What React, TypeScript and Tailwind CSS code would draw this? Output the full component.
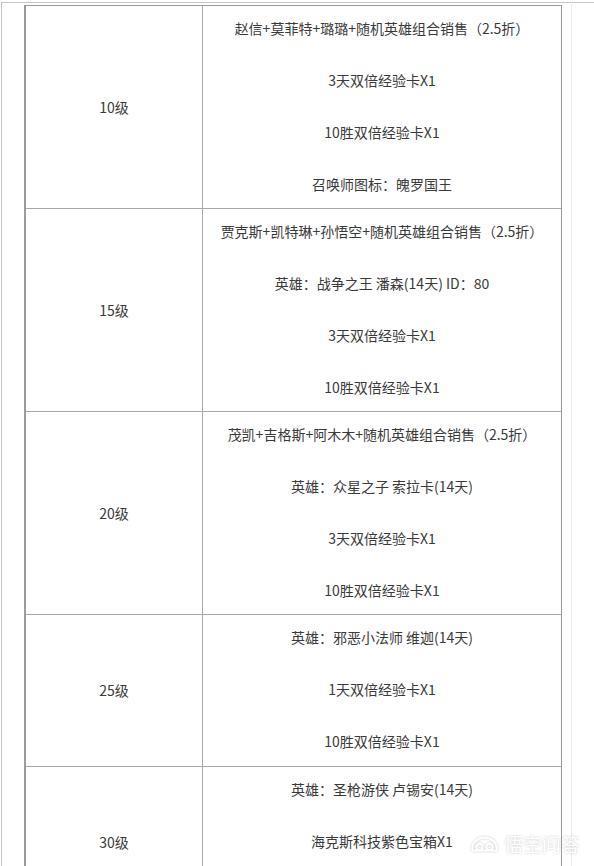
import React from 'react';

type Row = { level: string; items: string[]; h: string };

const rows: Row[] = [
  {
    level: '10级',
    h: 'h-[203px]',
    items: ['赵信+莫菲特+璐璐+随机英雄组合销售（2.5折）', '3天双倍经验卡X1', '10胜双倍经验卡X1', '召唤师图标：魄罗国王'],
  },
  {
    level: '15级',
    h: 'h-[203px]',
    items: ['贾克斯+凯特琳+孙悟空+随机英雄组合销售（2.5折）', '英雄：战争之王 潘森(14天) ID：80', '3天双倍经验卡X1', '10胜双倍经验卡X1'],
  },
  {
    level: '20级',
    h: 'h-[203px]',
    items: ['茂凯+吉格斯+阿木木+随机英雄组合销售（2.5折）', '英雄：众星之子 索拉卡(14天)', '3天双倍经验卡X1', '10胜双倍经验卡X1'],
  },
  {
    level: '25级',
    h: 'h-[152px]',
    items: ['英雄：邪恶小法师 维迦(14天)', '1天双倍经验卡X1', '10胜双倍经验卡X1'],
  },
  {
    level: '30级',
    h: 'h-[152px]',
    items: ['英雄：圣枪游侠 卢锡安(14天)', '海克斯科技紫色宝箱X1'],
  },
];

function Watermark() {
  return (
    <div className="absolute left-[470px] top-[834px] flex items-center gap-[5px] [filter:drop-shadow(0_0_1px_rgba(0,0,0,0.22))]">
      <svg width="29" height="16" viewBox="0 0 29 16" fill="none" stroke="white" strokeWidth="2">
        <path d="M2 14 C2 6 8 1.5 14.5 1.5 C21 1.5 27 6 27 14" />
        <circle cx="9.5" cy="11" r="3.2" />
        <circle cx="19.5" cy="11" r="3.2" />
        <path d="M2 14.5 H27" />
      </svg>
      <span className="text-[19px] leading-none text-white">悟空问答</span>
    </div>
  );
}

export default function App() {
  return (
    <div
      className="relative h-[866px] w-[594px] overflow-hidden bg-white pt-[2px] text-[#3a3a3a]"
      style={{ fontFamily: '"Noto Sans CJK SC", "Noto Sans", sans-serif' }}
    >
      <div className="ml-[1px] h-full border-l border-t border-[#c6c6c6] pl-[22px] pt-[2px]">
        <div className="relative w-[538px] border-l-2 border-r border-t border-[#9a9a9a]">
          {rows.map((row) => (
            <div key={row.level} className={`flex border-b border-[#a8a8a8] ${row.h}`}>
              <div className="flex w-[177px] items-center justify-center border-r border-[#a8a8a8] text-[14px]">
                {row.level}
              </div>
              <div className="flex flex-1 flex-col items-center gap-8 pt-[12px] text-[14px] leading-5">
                {row.items.map((t) => (
                  <p key={t}>{t}</p>
                ))}
              </div>
            </div>
          ))}
        </div>
      </div>
      <div className="absolute left-[571px] top-[2px] h-full w-px bg-[#ececec]" />
      <Watermark />
    </div>
  );
}
